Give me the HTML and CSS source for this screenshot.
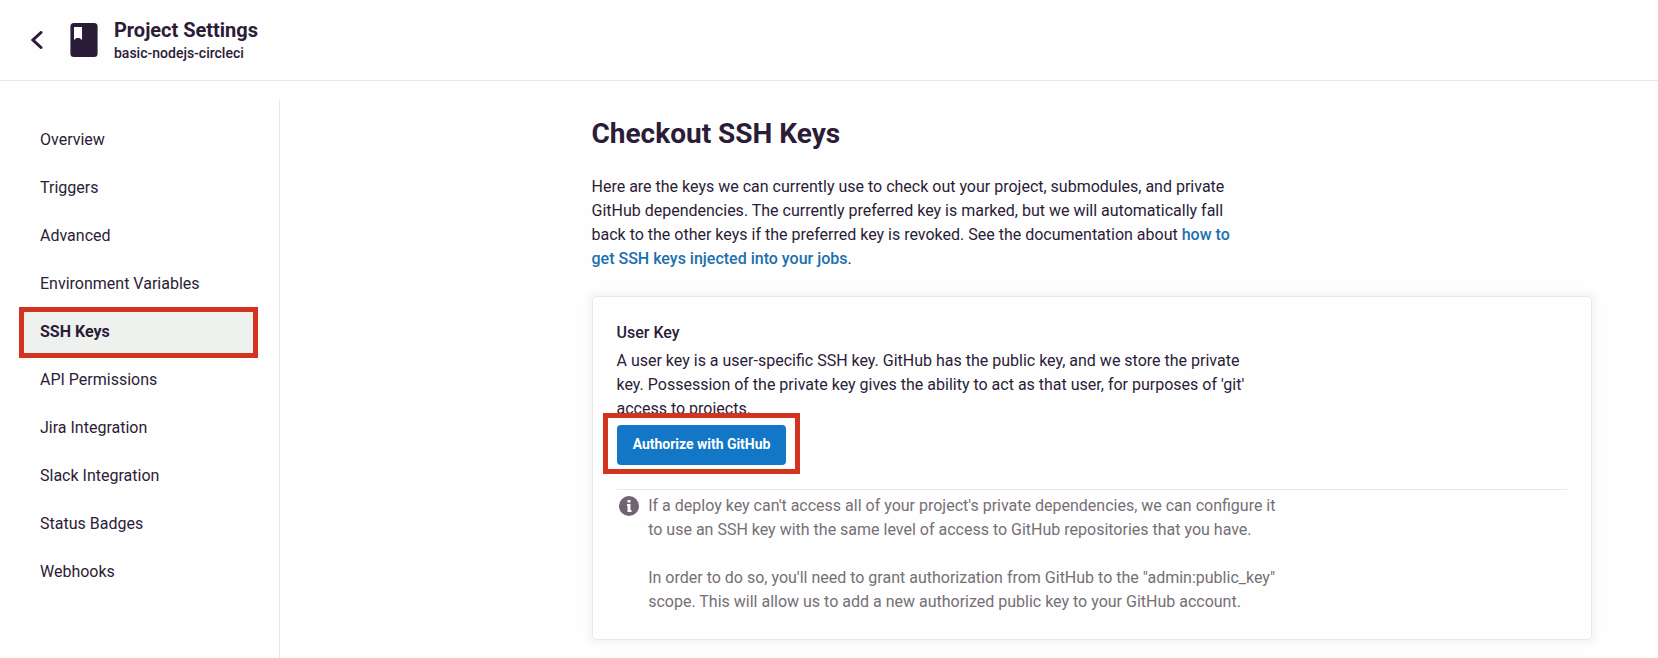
FILE: index.html
```html
<!DOCTYPE html>
<html lang="en">
<head>
<meta charset="utf-8">
<title>Project Settings</title>
<link rel="stylesheet" href="styles.css">
</head>
<body>
<header class="header">
  <svg class="back" width="12" height="18" viewBox="0 0 12 18"><path d="M10 1.500 2 9l8 7.500" fill="none" stroke="#2b1c38" stroke-width="3" stroke-linecap="round"/></svg>
  <svg class="book" width="28" height="34" viewBox="0 0 28 34"><rect x=".4" width="27.200" height="34" rx="3.500" fill="#2b1c38"/><path d="M4 4h8v13l-2.500-2h-3l-2.500 2z" fill="#fefefe"/></svg>
  <div class="titles">
    <div class="title">Project Settings</div>
    <div class="subtitle">basic-nodejs-circleci</div>
  </div>
</header>
<div class="page">
  <nav class="sidebar">
    <a class="item">Overview</a>
    <a class="item">Triggers</a>
    <a class="item">Advanced</a>
    <a class="item">Environment Variables</a>
    <a class="item active">SSH Keys</a>
    <a class="item">API Permissions</a>
    <a class="item">Jira Integration</a>
    <a class="item">Slack Integration</a>
    <a class="item">Status Badges</a>
    <a class="item">Webhooks</a>
  </nav>
  <main class="content">
    <h1 class="heading">Checkout SSH Keys</h1>
    <p class="intro">Here are the keys we can currently use to check out your project, submodules, and private<br>GitHub dependencies. The currently preferred key is marked, but we will automatically fall<br>back to the other keys if the preferred key is revoked. See the documentation about <a class="link">how to<br>get SSH keys injected into your jobs</a>.</p>
    <section class="card">
      <h2 class="card-title">User Key</h2>
      <p class="card-text">A user key is a user-specific SSH key. GitHub has the public key, and we store the private<br>key. Possession of the private key gives the ability to act as that user, for purposes of 'git'<br>access to projects.</p>
      <div class="action">
        <span class="callout"></span>
        <button class="button">Authorize with GitHub</button>
      </div>
      <div class="note">
        <svg class="info" width="20" height="20" viewBox="0 0 20 20"><circle cx="10" cy="10" r="10" fill="#706372"/><path d="M8.500 4h3v2.500h-3zM8 8h3.500v6h1v2h-4v-6h-.5z" fill="#fefefe"/></svg>
        <div class="note-text">
          <p>If a deploy key can't access all of your project's private dependencies, we can configure it<br>to use an SSH key with the same level of access to GitHub repositories that you have.</p>
          <p>In order to do so, you'll need to grant authorization from GitHub to the "admin:public_key"<br>scope. This will allow us to add a new authorized public key to your GitHub account.</p>
        </div>
      </div>
    </section>
  </main>
</div>
</body>
</html>
```

FILE: styles.css
```css
* { box-sizing: border-box; }
body {
  margin: 0;
  height: 658px;
  overflow: hidden;
  background: #fefefe;
  color: #2b1c38;
  font: 16px/24px Roboto, sans-serif;
}
h1, h2, p { margin: 0; }
p, .note-text { white-space: nowrap; }
.header {
  display: flex;
  align-items: center;
  height: 81px;
  padding-left: 31px;
  border-bottom: 1px solid #e4ebe4;
}
.book { margin-left: 27px; }
.titles { margin-left: 16px; padding-top: 1px; }
.title { font-size: 20px; font-weight: 700; line-height: 24px; letter-spacing: -.02px; }
.subtitle { padding-top: 1px; font-size: 14px; font-weight: 500; line-height: 20px; }
.page { display: flex; height: 577px; padding-top: 19px; }
.sidebar {
  width: 280px;
  padding: 15px 21px 0 19px;
  border-right: 1px solid #e7e7e7;
}
.item {
  display: flex;
  align-items: center;
  height: 48px;
  padding: 2px 0 0 21px;
}
/* The callout frame extends past the row without moving its neighbours. */
.active {
  height: 51px;
  margin-bottom: -3px;
  padding: 0 0 1px 16px;
  border: 5px solid #d23420;
  background: #eef1ee;
  font-weight: 700;
}
.content { width: 1000px; margin-left: 312px; padding-top: 14px; }
.heading { margin-left: -.5px; font-size: 28px; line-height: 40px; font-weight: 700; }
.intro { margin: 21px 0 0 -.5px; }
.link { color: #1b70ae; font-weight: 500; }
.card {
  height: 344px;
  margin-top: 25px;
  padding: 24px 24px 24px 23.5px;
  border: 1px solid #e4eae4;
  border-radius: 4px;
  box-shadow: 0 0 8px 2px rgba(50, 70, 50, .07);
}
.card-title { font-size: 16px; line-height: 24px; font-weight: 500; }
.card-text { margin-top: 4px; }
.action { position: relative; height: 40px; margin: 4px 0 0 .5px; }
.callout {
  position: absolute;
  top: -12px;
  left: -14px;
  width: 197px;
  height: 61px;
  border: 5px solid #d23420;
  background: #fefefe;
}
.button {
  position: relative;
  display: block;
  width: 169px;
  height: 40px;
  padding: 0 0 2px;
  border: 0;
  border-radius: 4px;
  background: #1177c6;
  color: #fefefe;
  font: 700 14px/20px Roboto, sans-serif;
  letter-spacing: -.02px;
}
.note {
  display: flex;
  margin: 24px 0 0 .5px;
  padding-top: 4px;
  border-top: 1px solid #e8e8e8;
  color: #766f76;
}
.info { margin: 2px 0 0 2px; }
.note-text {
  display: flex;
  flex-direction: column;
  gap: 24px;
  margin-left: 9.2px;
}
```
